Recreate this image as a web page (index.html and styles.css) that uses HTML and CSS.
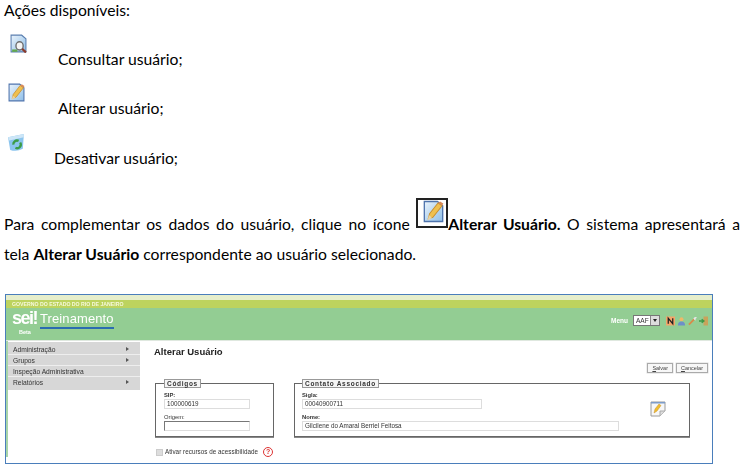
FILE: index.html
```html
<!DOCTYPE html>
<html lang="pt-BR">
<head>
<meta charset="utf-8">
<title>Alterar Usuário</title>
<link rel="stylesheet" href="styles.css">
</head>
<body>
<svg class="defs" width="0" height="0" aria-hidden="true">
  <defs>
    <linearGradient id="page" x1="0" y1="0" x2="1" y2="1"><stop offset="0" stop-color="#eaf3fb"/><stop offset="1" stop-color="#8fbfe8"/></linearGradient>
    <symbol id="edit" viewBox="0 0 16 16" preserveAspectRatio="none">
      <path d="M1 1H11L15 4V15H1Z" fill="url(#page)" stroke="#4f74ad"/>
      <path d="M4 13 5 9.500 11.500 2 14.500 4 7.500 12Z" fill="#efc04f" stroke="#c98f2c" stroke-width=".7"/>
      <path d="M3.500 14 4.500 10.500 7 12.500Z" fill="#e8d3a4"/>
      <path d="M11.500 2 14.500 4 15.500 2.500 13 1Z" fill="#d98a5a"/>
    </symbol>
  </defs>
</svg>
<main class="doc">
  <p class="heading">Ações disponíveis:</p>
  <div class="action action-view">
    <svg class="ico" viewBox="0 0 16 16" preserveAspectRatio="none" aria-hidden="true">
      <path d="M1 1H11L15 4V15H1Z" fill="url(#page)" stroke="#5b7fb0"/>
      <path d="M2 13H7V15H2Z" fill="#63a84d"/>
      <circle cx="9" cy="10" r="3.400" fill="#f4f4f4" stroke="#6d6d6d" stroke-width="1.300"/>
      <path d="M11.500 12.500 15 15.500" stroke="#8c3a2a" stroke-width="2"/>
    </svg>
    <span class="label label-view">Consultar usuário;</span>
  </div>
  <div class="action action-edit">
    <svg class="ico" viewBox="0 0 16 16" preserveAspectRatio="none" aria-hidden="true"><use href="#edit"/></svg>
    <span class="label label-edit">Alterar usuário;</span>
  </div>
  <div class="action action-off">
    <svg class="ico ico-off" viewBox="0 0 18 18" preserveAspectRatio="none" aria-hidden="true">
      <path d="M1 4 16 1 15 15Q9 18 3 16Z" fill="#8cc5ee"/>
      <path d="M1 4 16 1 16 4 2 7Z" fill="#cde6f7"/>
      <path d="M6 11A3.500 3.500 0 0 1 11 7.500M12.500 9A3.500 3.500 0 0 1 8 14" fill="none" stroke="#3c9c46" stroke-width="2.200"/>
    </svg>
    <span class="label label-off">Desativar usuário;</span>
  </div>
  <p class="para para-first">Para complementar os dados do usuário, clique no ícone <span class="boxed"><svg class="boxed-ico" viewBox="0 0 16 16" preserveAspectRatio="none" aria-hidden="true"><use href="#edit"/></svg></span><b>Alterar Usuário.</b> O sistema apresentará a</p>
  <p class="para para-second">tela <b>Alterar Usuário</b> correspondente ao usuário selecionado.</p>

  <section class="shot">
    <header class="top">
      <div class="gov">GOVERNO DO ESTADO DO RIO DE JANEIRO</div>
      <div class="brand">
        <div class="logo"><span class="sei">sei<i class="bang">!</i></span><span class="beta">Beta</span></div>
        <div class="env">Treinamento</div>
        <div class="tools">
          <span class="menu-label">Menu</span>
          <span class="unit"><span class="unit-val">AAF</span><span class="unit-arrow"></span></span>
          <svg class="tool" viewBox="0 0 10 10" aria-hidden="true"><rect width="10" height="10" fill="#f3a66b"/><path d="M2.500 8V2L7.500 8V2" fill="none" stroke="#222" stroke-width="1.400"/></svg>
          <svg class="tool" viewBox="0 0 10 10" aria-hidden="true"><circle cx="5" cy="3" r="2.200" fill="#eeb868"/><path d="M1 10Q1 5.500 5 5.500T9 10Z" fill="#6d8fc9"/></svg>
          <svg class="tool" viewBox="0 0 10 10" aria-hidden="true"><path d="M1 9 7 3" stroke="#d98a4a" stroke-width="2"/><path d="M6 2Q8 0 10 1L8 3 9 4Q7 5 6 2Z" fill="#e6e6e6"/></svg>
          <svg class="tool" viewBox="0 0 10 10" aria-hidden="true"><path d="M5 0H10V10H5Z" fill="#c9a35a"/><path d="M0 5H5M3 3 5.500 5 3 7" fill="none" stroke="#3d9a46" stroke-width="1.500"/></svg>
        </div>
      </div>
    </header>
    <div class="body">
      <nav class="side">
        <div class="item">Administração<span class="arr"></span></div>
        <div class="item">Grupos<span class="arr"></span></div>
        <div class="item">Inspeção Administrativa</div>
        <div class="item">Relatórios<span class="arr"></span></div>
      </nav>
      <div class="content">
        <h1 class="title">Alterar Usuário</h1>
        <div class="buttons">
          <button class="btn" type="button"><u>S</u>alvar</button>
          <button class="btn" type="button"><u>C</u>ancelar</button>
        </div>
        <div class="groups">
          <fieldset class="group group-codes">
            <legend class="legend">Códigos</legend>
            <label class="fld-label strong">SIP:</label>
            <div class="input input-sip">100000619</div>
            <label class="fld-label">Origem:</label>
            <div class="input input-origin"></div>
          </fieldset>
          <fieldset class="group group-contact">
            <legend class="legend">Contato Associado</legend>
            <div class="contact-row">
              <div class="contact-fields">
                <label class="fld-label strong">Sigla:</label>
                <div class="input input-sigla">00040900711</div>
                <label class="fld-label strong">Nome:</label>
                <div class="input input-nome">Gilcilene do Amaral Berriel Feitosa</div>
              </div>
              <svg class="contact-ico" viewBox="0 0 16 16" aria-hidden="true">
                <path d="M1 1H15V10L10 15H1Z" fill="#f7f7f7" stroke="#9a9a9a"/>
                <path d="M1 1H15V2.500H1Z" fill="#7d9cc9"/>
                <path d="M4 12 5 8 9 3 11 4.500 7 10Z" fill="#efbe2f" stroke="#c98f2c" stroke-width=".5"/>
                <path d="M10 15V10H15" fill="#ddd" stroke="#aaa"/>
              </svg>
            </div>
          </fieldset>
        </div>
        <div class="access">
          <span class="check"></span>
          <span class="access-label">Ativar recursos de acessibilidade</span>
          <span class="help">?</span>
        </div>
      </div>
    </div>
  </section>
</main>
</body>
</html>
```

FILE: styles.css
```css
* { box-sizing: border-box; }
html, body { margin: 0; padding: 0; background: #fff; }
body { width: 751px; height: 468px; overflow: hidden; font-family: Lato, "Open Sans", sans-serif; color: #000; }
.defs { display: block; height: 0; }
.doc { padding: 0 11px 0 4px; }
.heading { margin: 0; padding-top: 1px; font-size: 15.700px; line-height: 19px; }
.action { font-size: 15.700px; line-height: 19px; }
.action-view { height: 49px; margin-top: 14px; }
.action-edit { height: 50px; }
.action-off { height: 50px; }
.ico { display: block; width: 17px; height: 19px; filter: blur(.3px); }
.action-view .ico { margin-left: 6px; }
.action-edit .ico { margin-left: 4px; }
.ico-off { margin-left: 3px; width: 19px; }
.label { display: block; margin-top: -3px; }
.label-view { margin-left: 54px; }
.label-edit { margin-left: 54px; }
.label-off { margin-left: 50px; }
.para { margin: 0; font-size: 15.700px; line-height: 19px; }
.para-first { margin-top: 23px; text-align: justify; text-align-last: justify; height: 32px; padding-top: 9px; }
.para-second { margin-top: 7px; }
.boxed { display: inline-block; width: 32px; height: 30px; border: 2px solid #222; vertical-align: 2px; margin-top: -19px; padding: 0 0 0 5px; }
.boxed-ico { display: block; width: 21px; height: 23px; filter: blur(.3px); }
.shot { width: 708px; height: 170px; margin: 30px 0 0 1px; border: 1px solid #4a7ebb; background: #fff; font-family: "Liberation Sans", Arial, sans-serif; color: #222; filter: blur(.35px); }
.top { border-top: 5px solid #e6eecb; }
.gov { height: 8px; background: #bdd35e; color: #f6f8dc; font-size: 5.200px; line-height: 8px; padding-left: 6px; font-weight: bold; }
.brand { height: 33px; background: #93cd93; border-bottom: 1px solid #dfe8df; display: flex; align-items: flex-start; }
.logo { width: 28px; margin-left: 6px; color: #fff; }
.sei { display: block; font-weight: bold; font-size: 18px; line-height: 19px; letter-spacing: -1.500px; margin-top: 1px; }
.bang { font-style: normal; color: #fff; }
.beta { display: block; font-size: 5.500px; line-height: 8px; margin-left: 7px; font-weight: bold; }
.env { margin-top: 4px; font-size: 13px; line-height: 14px; height: 17px; color: #fff; letter-spacing: .1px; border-bottom: 2px solid #2b6cb0; }
.tools { margin-left: auto; margin-right: 4px; margin-top: 7px; display: flex; align-items: center; gap: 2px; }
.menu-label { color: #fff; font-size: 6.500px; font-weight: bold; margin-right: 3px; }
.unit { display: flex; width: 27px; height: 11px; border: 1px solid #777; background: #fff; margin-right: 4px; font-size: 6.500px; line-height: 9px; color: #333; }
.unit-val { flex: 1; padding-left: 2px; }
.unit-arrow { width: 9px; background: #ddd; border-left: 1px solid #888; position: relative; }
.unit-arrow::after { content: ""; position: absolute; left: 2px; top: 3px; border: 2px solid transparent; border-top: 3px solid #222; border-bottom: 0; }
.tool { width: 9px; height: 10px; }
.body { display: flex; border-left: 2px solid #a8d5a8; }
.side { width: 132px; height: 48px; flex: none; margin-top: 1px; padding-top: 2px; background: #d7d7d7; }
.item { position: relative; height: 10.900px; background: #d7d7d7; border-bottom: 1px solid #eee; font-size: 6.700px; line-height: 11px; padding-left: 5px; color: #333; }
.item:last-child { border-bottom: 0; }
.arr { position: absolute; right: 11px; top: 3px; border: 2px solid transparent; border-left: 3px solid #555; border-right: 0; }
.content { flex: 1; padding: 5px 4px 0 14px; }
.title { margin: 0; font-size: 9.500px; line-height: 12px; color: #222; }
.buttons { display: flex; justify-content: flex-end; gap: 3px; margin-top: 5px; }
.btn { height: 10px; padding: 0 4px; border: 1px solid #aaa; background: #f7f7f7; font: 5.500px/8px "Liberation Sans", Arial, sans-serif; color: #444; box-shadow: 0 0 0 .5px #ddd; }
.groups { display: flex; margin-top: 6px; margin-left: 1px; gap: 20px; }
.group { margin: 0; padding: 3px 5px 0 8px; border: 1px solid #666; box-shadow: 0 1px 0 #888; height: 58px; min-width: 0; }
.group-codes { width: 119px; }
.group-contact { width: 396px; padding-left: 7px; }
.legend { padding: 0 2px; border: 1px solid #999; background: #f5f5f5; font-size: 6.500px; line-height: 7px; letter-spacing: .7px; font-weight: bold; color: #333; }
.fld-label { display: block; font-size: 5.800px; line-height: 8px; color: #333; }
.strong { font-weight: bold; }
.input { height: 10px; border: 1px solid #ddd; font-size: 6.300px; line-height: 8px; padding-left: 2px; color: #333; background: #fff; margin-bottom: 4px; }
.input-sip, .input-origin { width: 86px; }
.input-origin { border-top: 1px solid #777; border-left: 1px solid #777; }
.input-sigla { width: 180px; }
.input-nome { width: 317px; margin-bottom: 0; }
.contact-row { display: flex; }
.contact-fields { width: 348px; }
.contact-ico { width: 16px; height: 16px; margin-top: 10px; }
.access { display: flex; align-items: center; margin-top: 10px; margin-left: 2px; }
.check { width: 7px; height: 7px; background: #ddd; border: 1px solid #ccc; margin-right: 2px; }
.access-label { font-size: 6.300px; line-height: 8px; color: #333; letter-spacing: .03px; }
.help { width: 10px; height: 10px; margin-left: 5px; border: 1px solid #d33; border-radius: 50%; color: #d33; font-size: 7px; line-height: 8px; text-align: center; font-weight: bold; }
```
